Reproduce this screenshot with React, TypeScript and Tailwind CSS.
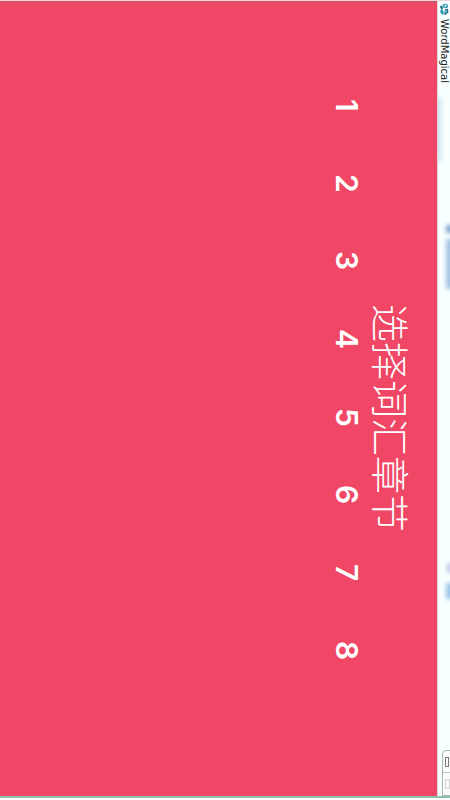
const chapters = [1, 2, 3, 4, 5, 6, 7, 8];

function AppIcon() {
  return (
    <svg viewBox="0 0 10 14" className="h-[14px] w-[10px] shrink-0" fill="none">
      <path d="M5.6 1.4 8.6 2.6 9.2 5.4 6.6 6.4 4.2 5.2 3.6 2.6Z" fill="#3fa3b4" />
      <path d="M5.4 2.6 7.4 3.2 7.6 4.6 5.8 4.6Z" fill="#e4fafc" />
      <path d="M.8 4.2 3 3.4 4.2 6 2.4 8Z" fill="#1f7286" />
      <path d="M1 8.4 3.6 7.4 4.8 10.2 4.4 13 1.8 11.6Z" fill="#2f9fb2" />
      <path d="M6 7.4 9 6.8 9.4 10.4 6.6 12.8 5.2 12.4Z" fill="#1b6a85" />
      <path d="M6.4 8.6 8 8.2 7.8 10.2 6.4 10.8Z" fill="#8fd6e0" />
    </svg>
  );
}

function TitleBar() {
  return (
    <header className="relative flex w-[13px] shrink-0 items-center overflow-hidden border-l border-[#e3d5da] bg-[#f8ffff]">
      {/* blurred shapes behind the glass frame */}
      <div className="absolute top-[96px] -left-1 h-[64px] w-[6px] bg-[#b9d8ec] blur-[3px]" />
      <div className="absolute top-[224px] -right-1 h-[8px] w-[8px] bg-[#7fa6d0] blur-[2px]" />
      <div className="absolute top-[238px] -right-1 h-[50px] w-[8px] bg-[#a4c4e4] blur-[2px]" />
      <div className="absolute top-[562px] -right-1 h-[10px] w-[7px] bg-[#c3cdec] blur-[2px]" />
      <div className="absolute top-[582px] -right-1 h-[16px] w-[8px] bg-[#9cc6ea] blur-[2px]" />

      <div className="relative flex items-center gap-[3px] pt-[1px]">
        <AppIcon />
        <h1 className="font-['DejaVu_Sans',sans-serif] text-[10px] leading-[12px] text-[#222]">WordMagical</h1>
      </div>
      <div className="absolute -right-2 bottom-0 flex h-[46px] w-[16px] overflow-hidden rounded-tl-[4px] border border-[#aab4b6] bg-[#fbfdfd]">
        <button aria-label="Minimize" className="flex h-[22px] flex-col justify-end border-b border-[#c3cbcc] pt-[6px] pl-[2px]">
          <span className="block h-[10px] w-[4px] border border-[#777]" />
        </button>
        <button aria-label="Maximize" disabled className="flex flex-1 flex-col justify-end pt-[6px] pl-[2px]">
          <span className="block h-[10px] w-[5px] border border-[#d5d5d5]" />
        </button>
      </div>
    </header>
  );
}

export default function App() {
  return (
    <div className="h-screen w-full border-t border-t-[#f0d3d6] border-b-2 border-b-white font-['Inter','Noto_Sans_CJK_SC',sans-serif] [writing-mode:vertical-rl] [text-orientation:sideways]">
      <div className="flex h-full w-full flex-col overflow-hidden border-b-2 border-[#8fbfb0] bg-[#ef4765]">
        <TitleBar />
        <main className="flex flex-1 flex-col border-t-2 border-[#d4506a] pt-[63px] text-white">
          <h2 className="mr-[20px] pt-[238px] font-['Noto_Sans_CJK_SC',sans-serif] text-[38px] leading-[50px] font-light">
            选择词汇章节
          </h2>
          <nav className="flex">
            {chapters.map((chapter) => (
              <button key={chapter} className="h-[78px] text-center text-[30px] leading-[40px] font-semibold">
                {chapter}
              </button>
            ))}
          </nav>
        </main>
      </div>
    </div>
  );
}
